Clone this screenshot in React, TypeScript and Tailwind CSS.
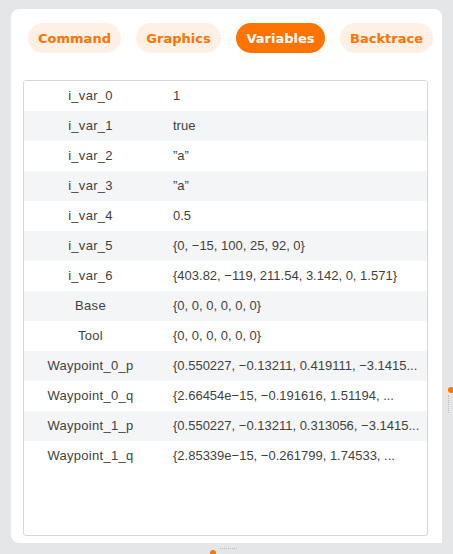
import React from 'react'

const tabs = [
  { label: 'Command', w: 'w-[93px]' },
  { label: 'Graphics', w: 'w-[85px]' },
  { label: 'Variables', w: 'w-[89px]', active: true },
  { label: 'Backtrace', w: 'w-[93px]' },
]

const rows: [string, string][] = [
  ['i_var_0', '1'],
  ['i_var_1', 'true'],
  ['i_var_2', '\u201da\u201d'],
  ['i_var_3', '\u201da\u201d'],
  ['i_var_4', '0.5'],
  ['i_var_5', '{0, \u221215, 100, 25, 92, 0}'],
  ['i_var_6', '{403.82, \u2212119, 211.54, 3.142, 0, 1.571}'],
  ['Base', '{0, 0, 0, 0, 0, 0}'],
  ['Tool', '{0, 0, 0, 0, 0, 0}'],
  ['Waypoint_0_p', '{0.550227, \u22120.13211, 0.419111, \u22123.1415...'],
  ['Waypoint_0_q', '{2.66454e\u221215, \u22120.191616, 1.51194, ...'],
  ['Waypoint_1_p', '{0.550227, \u22120.13211, 0.313056, \u22123.1415...'],
  ['Waypoint_1_q', '{2.85339e\u221215, \u22120.261799, 1.74533, ...'],
]

export default function App() {
  return (
    <div className="relative w-[453px] h-[554px] bg-[#e5e6e8] overflow-hidden pt-[9px] pl-[11px]">
      <div className="w-[431px] h-[534px] bg-white rounded-t-[8px] rounded-bl-[8px] pt-[14px] pl-[12px] flex flex-col">
        {/* Tabs */}
        <div className="flex gap-[15px] pl-[5px] h-[30px] shrink-0">
          {tabs.map((t) => (
            <div
              key={t.label}
              className={`${t.w} h-[30px] pt-[1px] rounded-full flex items-center justify-center text-[13px] font-bold font-['DejaVu_Sans',sans-serif] ${
                t.active ? 'bg-[#ff7300] text-white' : 'bg-[#fff0e5] text-[#ff7300]'
              }`}
            >
              {t.label}
            </div>
          ))}
        </div>

        {/* Variables table */}
        <div className="mt-[27px] w-[405px] h-[456px] border border-[#d6d6d6] rounded-[3px] overflow-hidden font-['Liberation_Sans',Arial,sans-serif] text-[13px] text-[#3f3f3f]">
          {rows.map(([name, value], i) => (
            <div key={name} className={`flex h-[30px] items-center ${i % 2 === 1 ? 'bg-[#f4f5f7]' : 'bg-white'}`}>
              <div className="w-[133px] shrink-0 text-center tracking-[0.3px]">{name}</div>
              <div className="flex-1 min-w-0 pl-[16px] pr-[4px] whitespace-nowrap">{value}</div>
            </div>
          ))}
        </div>
      </div>

      {/* Resize handles */}
      <div className="absolute left-[448px] top-[387px] w-[6px] h-[6px] rounded-full bg-[#ff7300]" />
      <div className="absolute left-[448px] top-[395px] h-[18px] border-l border-dotted border-[#bdbdbd]" />
      <div className="absolute left-[220px] top-[548px] w-[17px] border-t border-dotted border-[#bdbdbd]" />
      <div className="absolute left-[210px] top-[550px] w-[6px] h-[6px] rounded-full bg-[#ff7300]" />
    </div>
  )
}
